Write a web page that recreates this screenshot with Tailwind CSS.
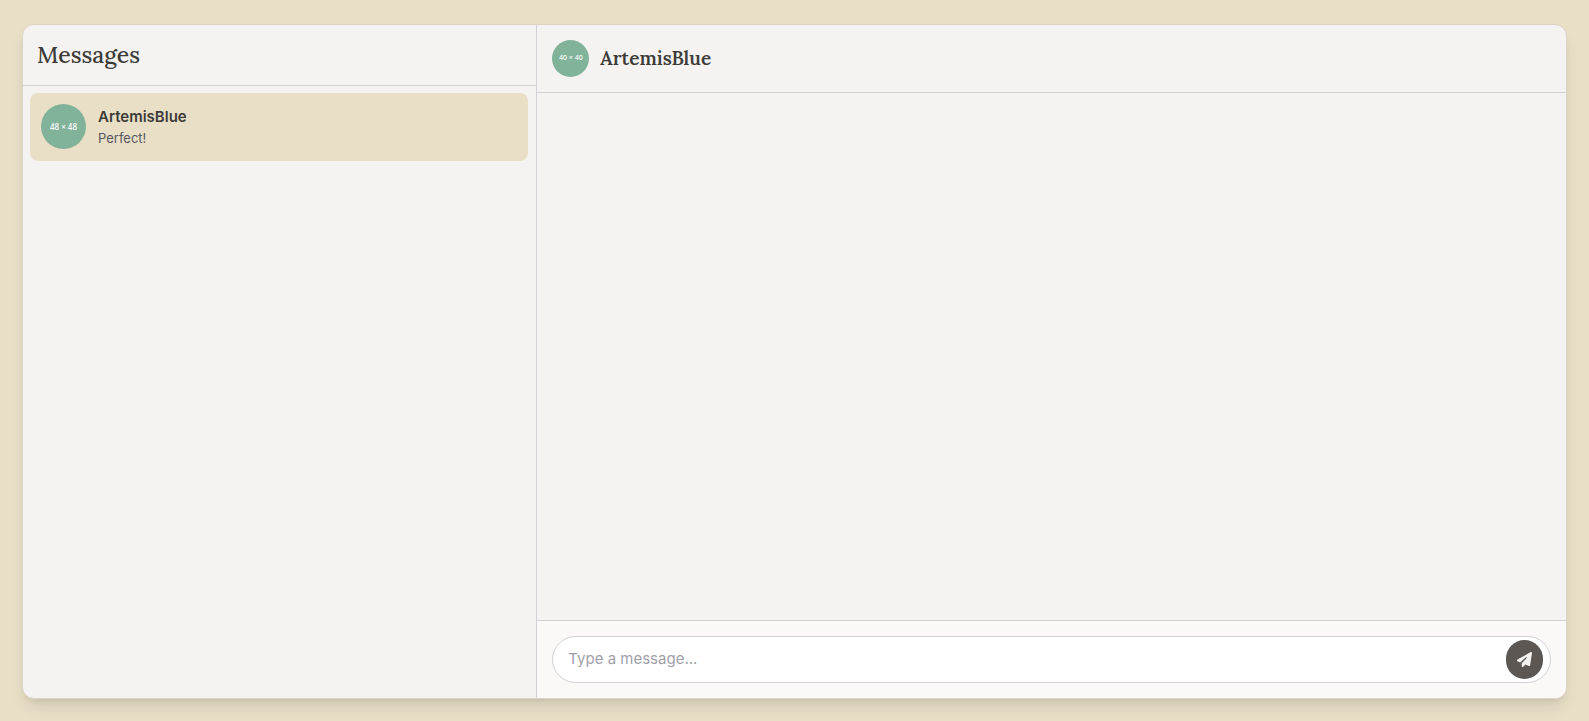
<!DOCTYPE html>
<html lang="en">
<head>
<meta charset="utf-8">
<meta name="viewport" content="width=device-width, initial-scale=1">
<title>Messages</title>
<script src="https://cdn.jsdelivr.net/npm/@tailwindcss/browser@4"></script>
</head>
<body class="flex h-screen bg-[#e9dfc7] px-[22px] pt-6 pb-[22px] font-['Inter',sans-serif] text-[15px] text-[#3d3b38]">
<main class="flex min-w-0 flex-1 overflow-hidden rounded-[12px] border border-[#ddd5c3] bg-[#f4f3f1] shadow-lg">
  <aside class="flex w-1/3 flex-col border-r border-[#d1d1d6]">
    <header class="border-b border-[#d1d1d6] px-[14px] py-[15px]">
      <h1 class="font-['Lora','Liberation_Serif',serif] text-[23px] leading-[30px] font-medium">Messages</h1>
    </header>
    <nav aria-label="Conversations" class="flex-1 overflow-y-auto py-[7px] pr-2 pl-[7px]">
      <button type="button" class="flex w-full items-center gap-3 rounded-lg bg-[#e9dfc7] px-[11px] pt-[11px] pb-3 text-left">
        <span class="flex size-[45px] shrink-0 items-center justify-center rounded-full bg-[#81b29a] font-['Noto_Sans',sans-serif] text-[8px] font-medium text-white">48 × 48</span>
        <span class="min-w-0 flex-1 pt-0.5">
          <span class="block truncate leading-[22px] font-semibold">ArtemisBlue</span>
          <span class="block truncate text-[13px] leading-[21px] text-[#57575f]">Perfect!</span>
        </span>
      </button>
    </nav>
  </aside>
  <section class="flex min-w-0 flex-1 flex-col">
    <header class="flex items-center gap-[11px] border-b border-[#d1d1d6] p-[15px]">
      <span class="flex size-[37px] shrink-0 items-center justify-center rounded-full bg-[#81b29a] font-['Noto_Sans',sans-serif] text-[7px] font-medium text-white">40 × 40</span>
      <h2 class="font-['Lora','Liberation_Serif',serif] text-[19px] leading-[25px] font-semibold">ArtemisBlue</h2>
    </header>
    <div class="flex-1"></div>
    <form class="border-t border-[#d1d1d6] bg-[#faf9f7] p-[15px]">
      <div class="flex items-center rounded-full border border-[#d1d1d6] bg-white pr-[7px]">
        <input type="text" aria-label="Message" placeholder="Type a message..." class="h-[45px] min-w-0 flex-1 rounded-full bg-transparent px-[15px] pb-0.5 outline-none placeholder:text-[#9f9fa9]">
        <button type="button" aria-label="Send" class="flex h-[39px] w-[37px] shrink-0 items-center justify-center rounded-full bg-[#5c5752] text-[#f4f3f1]">
          <svg class="size-[15px]" viewBox="0 0 512 512" fill="currentColor" aria-hidden="true"><path d="M498.100 5.600c10.100 7 15.400 19.100 13.500 31.200l-64 416c-1.500 9.700-7.400 18.200-16 23s-18.900 5.400-28 1.600L284 427.700l-68.500 74.100c-8.900 9.700-22.900 12.900-35.200 8.100S160 493.200 160 480v-83.600c0-4 1.500-7.800 4.200-10.800L331.800 202.800c5.800-6.300 5.600-16-.4-22s-15.700-6.400-22-.7L106 360.800l-88.300-44.200C7.100 311.300.3 300.700 0 288.900s5.900-22.800 16.100-28.700l448-256c10.700-6.100 23.900-5.500 34 1.400z"/></svg>
        </button>
      </div>
    </form>
  </section>
</main>
</body>
</html>
